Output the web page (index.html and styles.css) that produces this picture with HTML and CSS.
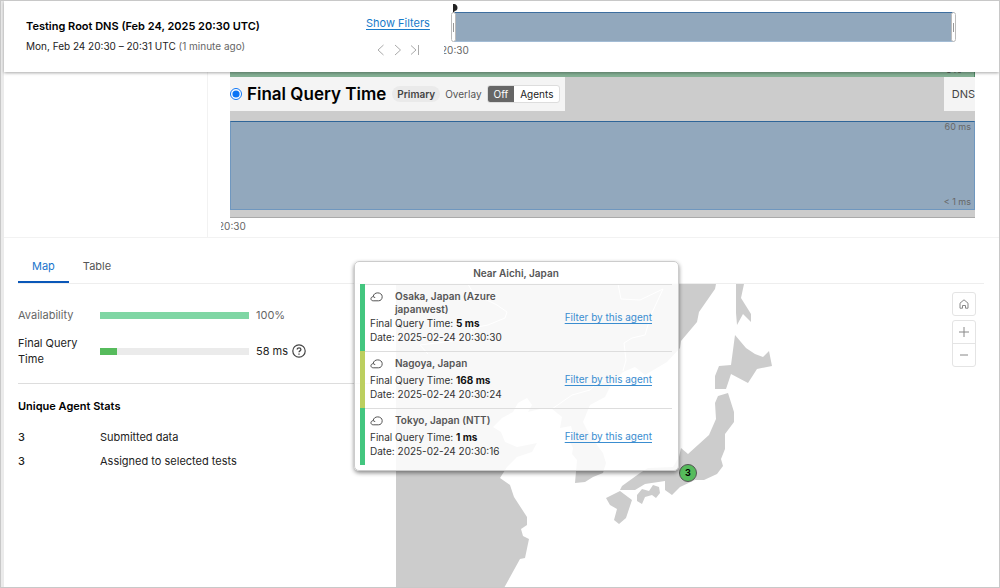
FILE: index.html
```html
<!DOCTYPE html>
<html lang="en">
<head>
<meta charset="utf-8">
<title>Testing Root DNS</title>
<link rel="stylesheet" href="styles.css">
</head>
<body>
<div class="app">
  <header class="topbar">
    <div class="test">
      <h1 class="test-name">Testing Root DNS (Feb 24, 2025 20:30 UTC)</h1>
      <p class="test-range">Mon, Feb 24 20:30 – 20:31 UTC <span class="muted">(1 minute ago)</span></p>
    </div>
    <div class="filters">
      <a class="link show-filters" href="#filters">Show Filters</a>
      <div class="steps">
        <button class="step" aria-label="Previous round"><svg width="10" height="12" viewBox="0 0 10 12"><path d="M7.500 1 2 6l5.500 5"/></svg></button>
        <button class="step" aria-label="Next round"><svg width="10" height="12" viewBox="0 0 10 12"><path d="M2 1l5.500 5L2 11"/></svg></button>
        <button class="step" aria-label="Latest round"><svg width="10" height="12" viewBox="0 0 10 12"><path d="M1 1.500 6 6l-5 4.500M8.500 1v10"/></svg></button>
      </div>
    </div>
    <div class="overview">
      <div class="overview-bar">
        <svg class="marker" width="5" height="9" viewBox="0 0 5 9"><path d="M0 0h1.500C3.500.5 4.500 2 4.500 4S3 7 1.500 7L1 9H0z" fill="#222"/></svg>
        <span class="handle handle-start"></span>
        <span class="handle handle-end"></span>
      </div>
      <div class="overview-tick"><span>20:30</span></div>
    </div>
  </header>

  <section class="timeline">
    <div class="timeline-side"></div>
    <div class="timeline-main">
      <div class="chart">
        <div class="availability-strip"><span>0%</span></div>
        <div class="metric-bar">
          <div class="metric">
            <label class="metric-label"><input class="metric-radio" type="radio" name="metric" checked><span>Final Query Time</span></label>
            <span class="pill">Primary</span>
            <span class="overlay-label">Overlay</span>
            <div class="segmented">
              <button class="segment segment-on">Off</button>
              <button class="segment">Agents</button>
            </div>
          </div>
          <div class="layer">DNS</div>
        </div>
        <div class="plot"><span>60 ms</span><span>&lt; 1 ms</span></div>
        <div class="plot-base"></div>
      </div>
      <div class="chart-tick"><span>20:30</span></div>
    </div>
  </section>

  <nav class="tabs">
    <button class="tab tab-on">Map</button>
    <button class="tab">Table</button>
  </nav>

  <main class="panel">
    <aside class="stats">
      <div class="gauges">
        <div class="gauge muted"><span>Availability</span><div class="track"><div class="fill fill-light" style="width:100%"></div></div><span>100%</span></div>
        <div class="gauge"><span>Final Query Time</span><div class="track"><div class="fill" style="width:11.500%"></div></div><span class="value">58 ms
          <svg width="14" height="14" viewBox="0 0 14 14" fill="none" stroke="#444"><circle cx="7" cy="7" r="6.200" stroke-width="1.200"/><path d="M5.200 5.600C5.200 3.200 8.900 3.300 8.900 5.500 8.900 6.900 7 6.800 7 8.300M7 9.500v1.200" stroke-width="1.300"/></svg></span></div>
      </div>
      <h2 class="stats-title">Unique Agent Stats</h2>
      <dl class="counts">
        <dt>3</dt><dd>Submitted data</dd>
        <dt>3</dt><dd>Assigned to selected tests</dd>
      </dl>
    </aside>

    <div class="map">
      <svg class="land" viewBox="396 284 588 303" preserveAspectRatio="xMinYMin slice" aria-hidden="true">
        <g fill="#ccc">
          <path d="M396 284H716L715 289 699 312 697 322 681 341 680 348 667 362 645 375 635 367 623 372 612 383 605 397 590 405 583 422 587 430 595 440 597 445 603 453 606 463 603 473 593 477 585 482 575 483 577 460 572 454 573 448 570 442 573 433 571 426 560 428 562 417 552 409 540 409 528 412 532 405 527 398 518 403 513 412 502 418 493 427 501 432 505 442 517 447 527 445 537 443 532 452 517 457 507 467 500 478 510 485 514 497 527 517 527 525 521 529 523 536 529 539 525 558 520 559 504 588H396z"/>
          <path d="M736 284h8l-3 14 10 16v8l-8-8-6 11-1-12z"/>
          <path d="M735 335l11 13 9 6 8 3 6-6 3 15-15 3-9 14-17-9-5 15h-11v-13l4-10 12-1z"/>
          <path d="M718 396l10-3 6 19v10l-9 12v15l-4 10 2 7-6 8-13 6h-9l-15 7-8 8-7-5v-9l-20 3-10 6h-15l2-4 18-13 8-5 25-1 6-10 2-9 7 6 21-19 7-16-1-16z"/>
          <path d="M620 491l12 9-6 18-7 6-5-4 3-11-7-4-4-7z"/>
          <path d="M637 495l5-6 7 2 4-6 6 2 1 6-4 5-4-3-7 2-3 7-5-3z"/>
        </g>
        <g fill="none" stroke="#fff">
          <path d="M468 284l5 9 24 12 10 7-2 6-17 7-16 3-2 10-25 4-25 3 8 9M618 284l3 15 19 1 23-11-12 26-6 20-13 3-8 5 2 17-3 11M612 383l-12-3-10 10-18 5-20 14"/>
        </g>
      </svg>
      <button class="pin">3</button>
      <section class="popup" aria-label="Near Aichi, Japan">
        <h3 class="popup-title">Near Aichi, Japan</h3>
        <article class="agent agent-good">
          <div class="agent-info">
            <div class="agent-name"><svg class="cloud" width="13" height="10" viewBox="0 0 13 10"><path d="M3.200 8.800C.2 8.800.2 4.700 3.200 4.700 3.400-.5 12.200-.3 12.200 4.700 12.200 7.200 10.700 8.800 8.500 8.800zM3.200 4.700Q4.700 4.700 5 6"/></svg><span>Osaka, Japan (Azure japanwest)</span></div>
            <div>Final Query Time: <b>5 ms</b></div>
            <div>Date: 2025-02-24 20:30:30</div>
          </div>
          <a class="link agent-link" href="#osaka">Filter by this agent</a>
        </article>
        <article class="agent agent-slow">
          <div class="agent-info">
            <div class="agent-name"><svg class="cloud" width="13" height="10" viewBox="0 0 13 10"><path d="M3.200 8.800C.2 8.800.2 4.700 3.200 4.700 3.400-.5 12.200-.3 12.200 4.700 12.200 7.200 10.700 8.800 8.500 8.800zM3.200 4.700Q4.700 4.700 5 6"/></svg><span>Nagoya, Japan</span></div>
            <div>Final Query Time: <b>168 ms</b></div>
            <div>Date: 2025-02-24 20:30:24</div>
          </div>
          <a class="link agent-link" href="#nagoya">Filter by this agent</a>
        </article>
        <article class="agent agent-good">
          <div class="agent-info">
            <div class="agent-name"><svg class="cloud" width="13" height="10" viewBox="0 0 13 10"><path d="M3.200 8.800C.2 8.800.2 4.700 3.200 4.700 3.400-.5 12.200-.3 12.200 4.700 12.200 7.200 10.700 8.800 8.500 8.800zM3.200 4.700Q4.700 4.700 5 6"/></svg><span>Tokyo, Japan (NTT)</span></div>
            <div>Final Query Time: <b>1 ms</b></div>
            <div>Date: 2025-02-24 20:30:16</div>
          </div>
          <a class="link agent-link" href="#tokyo">Filter by this agent</a>
        </article>
      </section>
      <div class="controls">
        <button class="control" aria-label="Reset view"><svg width="10" height="10" viewBox="0 0 10 10"><path d="M1 4.200 5 .8l4 3.400v5H6.500V6.500h-3v2.700H1z"/></svg></button>
        <div class="zoom">
          <button class="control" aria-label="Zoom in"><svg width="10" height="10" viewBox="0 0 10 10"><path d="M0 5h10M5 0v10"/></svg></button>
          <button class="control" aria-label="Zoom out"><svg width="10" height="10" viewBox="0 0 10 10"><path d="M1 5h8"/></svg></button>
        </div>
      </div>
    </div>
  </main>
</div>
</body>
</html>
```
FILE: styles.css
```css
* { box-sizing: border-box; }

body {
  margin: 0;
  background: #fff;
  color: #222;
  font: 11px/16px Inter, "Liberation Sans", sans-serif;
}

h1, h2, h3, p, dl, dd { margin: 0; }
button { margin: 0; padding: 0; border: 0; background: none; color: inherit; font: inherit; cursor: pointer; }
svg { display: block; }

.app {
  display: flex;
  flex-direction: column;
  height: 100vh;
  min-height: 480px;
  overflow: hidden;
  border: 1px solid #c8c8c8;
  box-shadow: inset 3px 0 #ebebeb;
  padding-left: 3px;
}

.muted { color: #666; }
.link { color: #1a7bc9; text-decoration: underline; text-underline-offset: 2px; }

/* Header */
.topbar {
  position: relative;
  z-index: 2;
  display: flex;
  flex: none;
  height: 71px;
  padding: 11px 45px 0 22px;
  background: #fff;
  box-shadow: 0 1px 3px rgba(0, 0, 0, .35);
}
.test { width: 340px; padding-top: 6px; }
.test-name { font-size: 11px; line-height: 16px; font-weight: 600; color: #000; }
.test-range { padding-top: 4px; font-size: 10px; }
.filters { width: 78px; padding-top: 3px; }
.show-filters { font-size: 11px; }
.steps { display: flex; gap: 7px; padding: 13px 0 0 10px; }
.step svg { fill: none; stroke: #aaa; stroke-width: 1; }
.overview { flex: 1; padding-left: 10px; }
.overview-bar {
  position: relative;
  height: 30px;
  border: 1px solid #a3bcd5;
  border-top: 1px solid #3d6e9f;
  background: #92a8bd;
}
.marker { position: absolute; left: -2px; top: -9px; }
.handle {
  position: absolute;
  top: -1px;
  width: 5px;
  height: 30px;
  border: 1px solid #bbb;
  border-radius: 3px;
  background: linear-gradient(#999, #999) center / 1px 9px no-repeat #fff;
}
.handle-start { left: -4px; }
.handle-end { right: -3px; }
.overview-tick, .chart-tick { display: flex; overflow: hidden; font-size: 10px; line-height: 16px; color: #666; }
.overview-tick { margin-left: -10px; }
.overview-tick span, .chart-tick span { margin-left: -3px; }

/* Timeline */
.timeline { display: flex; flex: none; border-bottom: 1px solid #f2f2f2; }
.timeline-side { width: 204px; border-right: 1px solid #f2f2f2; }
.timeline-main { flex: 1; padding: 0 24px 3px 22px; }
.chart { background: #ccc; }
.availability-strip {
  display: flex;
  align-items: flex-end;
  justify-content: flex-end;
  height: 5px;
  padding-right: 12px;
  border-right: 1px solid #4f8a67;
  background: #84b094;
  color: #555;
  font-size: 10px;
  line-height: 16px;
}
.metric-bar { display: flex; justify-content: space-between; height: 34px; margin-bottom: 10px; }
.metric { display: flex; align-items: center; padding-right: 5px; background: #f4f4f4; font-size: 10px; }
.metric-label { display: flex; align-items: center; gap: 5px; color: #000; font-size: 17px; font-weight: 600; }
.metric-radio { width: 12px; height: 12px; margin: 0; accent-color: #0b74f5; }
.pill { margin-left: 6px; padding: 0 5px; border-radius: 8px; background: #eaeaea; color: #444; font-weight: 600; }
.overlay-label { margin: 0 5px; color: #555; }
.segmented { display: flex; border: 1px solid #ddd; border-radius: 3px; overflow: hidden; background: #fff; }
.segment { padding: 0 6px; color: #222; }
.segment-on { background: #666; color: #fff; }
.layer { min-width: 30px; padding: 9px 0 0 8px; background: #f4f4f4; line-height: 16px; color: #444; }
.plot {
  display: flex;
  flex-direction: column;
  justify-content: space-between;
  align-items: flex-end;
  height: 89px;
  padding-right: 3px;
  border: 1px solid #6f97bf;
  border-top-color: #2f6598;
  background: #92a8bd;
  color: #666;
  font-size: 9px;
  line-height: 10px;
}
.plot span:last-child { padding-bottom: 2px; }
.plot-base { height: 8px; border-bottom: 1px solid #aaa; }
.chart-tick { margin-left: -9px; }

/* Tabs */
.tabs { display: flex; flex: none; margin: 0 15px 0 14px; padding-top: 12px; border-bottom: 1px solid #eee; }
.tab { height: 33px; padding: 0 14px; border-bottom: 2px solid transparent; color: #555; }
.tab-on { border-color: #0a57b8; color: #1a75cc; }

/* Panel */
.panel { display: flex; flex: 1; min-height: 0; margin: 0 15px 0 14px; }
.stats { width: 378px; flex: none; color: #222; }
.gauges { display: flex; flex-direction: column; gap: 12px; padding: 23px 0 16px; border-bottom: 1px solid #ddd; }
.gauge { display: grid; grid-template-columns: 75px 149px auto; column-gap: 7px; align-items: center; }
.track { height: 7px; background: #ebebeb; }
.fill { height: 7px; background: #56bb5c; }
.fill-light { background: #7fd6a4; }
.value { display: flex; align-items: center; gap: 4px; }
.stats-title { padding: 14px 0 15px; font-size: 11px; line-height: 16px; font-weight: 600; color: #000; }
.counts { display: grid; grid-template-columns: 75px auto; gap: 8px 7px; }
.counts dt { font-weight: 500; }

.map { position: relative; flex: 1; min-width: 0; }
.land { width: 100%; height: 100%; }
.pin {
  position: absolute;
  left: 283px;
  top: 180px;
  width: 18px;
  height: 18px;
  border: 1px solid #555;
  border-radius: 50%;
  background: #56bb5c;
  color: #000;
  font-size: 9px;
  line-height: 14px;
  font-weight: 700;
}
.popup {
  position: absolute;
  left: -42px;
  top: -23px;
  width: 325px;
  padding: 0 6px 5px 5px;
  border: 1px solid #ccc;
  border-radius: 5px;
  background: rgba(255, 255, 255, .86);
  box-shadow: 0 2px 4px rgba(0, 0, 0, .45);
}
.popup-title { font-size: 10px; line-height: 22px; font-weight: 600; text-align: center; color: #555; }
.agent {
  display: flex;
  align-items: center;
  justify-content: space-between;
  padding: 6px 20px 7px 5px;
  border-left: 5px solid #43c67f;
  box-shadow: inset 0 1px #ddd;
  font-size: 10px;
  line-height: 14px;
  color: #333;
}
.agent-slow { border-left-color: #bccf5f; }
.agent-info { width: 152px; }
.agent-name { display: flex; gap: 12px; min-height: 16px; line-height: 13px; font-weight: 600; color: #555; }
.agent-name svg { flex: none; margin-top: 2px; fill: none; stroke: #555; }
.agent b { font-weight: 700; color: #111; }
.agent-link { color: #3a8dd0; }

.controls { position: absolute; top: 8px; right: 8px; display: flex; flex-direction: column; gap: 4px; }
.controls > .control, .zoom { border: 1px solid #e4e4e4; border-radius: 3px; background: #fff; }
.control { display: flex; align-items: center; justify-content: center; width: 24px; height: 24px; }
.zoom { width: 24px; }
.zoom .control { width: 22px; height: 22px; }
.zoom .control + .control { height: 23px; border-top: 1px solid #e4e4e4; }
.control svg { fill: none; stroke: #888; }
```
